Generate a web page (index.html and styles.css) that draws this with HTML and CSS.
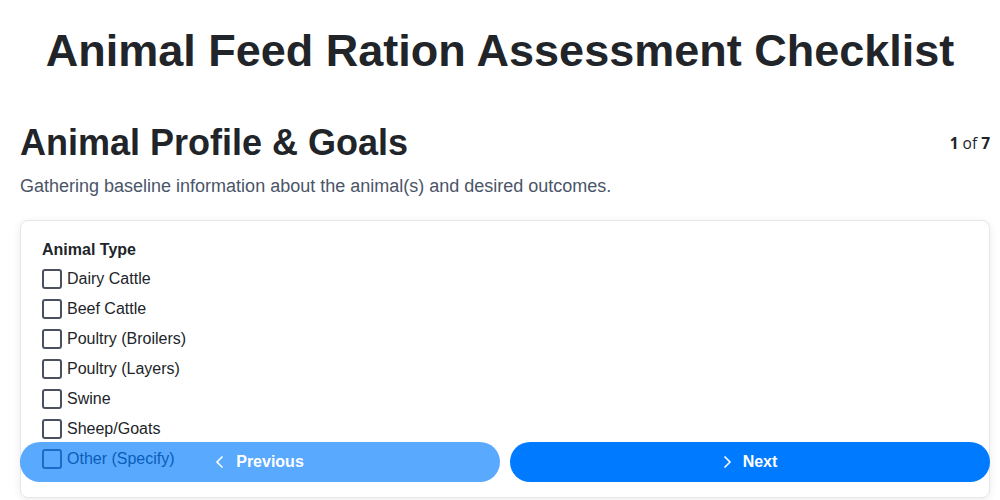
FILE: index.html
```html
<!DOCTYPE html>
<html lang="en">
<head>
<meta charset="utf-8">
<title>Animal Feed Ration Assessment Checklist</title>
<link rel="stylesheet" href="styles.css">
</head>
<body>
<h1 class="title">Animal Feed Ration Assessment Checklist</h1>
<main class="page">
  <div class="section-head">
    <h2 class="section-title">Animal Profile &amp; Goals</h2>
    <div class="counter"><b>1</b> of <b>7</b></div>
  </div>
  <p class="section-desc">Gathering baseline information about the animal(s) and desired outcomes.</p>
  <div class="card">
    <div class="field-label">Animal Type</div>
    <ul class="options">
      <li class="option"><span class="box"></span>Dairy Cattle</li>
      <li class="option"><span class="box"></span>Beef Cattle</li>
      <li class="option"><span class="box"></span>Poultry (Broilers)</li>
      <li class="option"><span class="box"></span>Poultry (Layers)</li>
      <li class="option"><span class="box"></span>Swine</li>
      <li class="option"><span class="box"></span>Sheep/Goats</li>
      <li class="option"><span class="box"></span>Other (Specify)</li>
    </ul>
  </div>
</main>
<nav class="nav">
  <button class="btn btn-prev" type="button">
    <svg class="chev" viewBox="0 0 16 16" width="16" height="16"><path d="M10.5 2.5 5 8l5.5 5.5" fill="none" stroke="currentColor" stroke-width="1.6"/></svg>
    Previous
  </button>
  <button class="btn btn-next" type="button">
    <svg class="chev" viewBox="0 0 16 16" width="16" height="16"><path d="M5.5 2.5 11 8l-5.5 5.5" fill="none" stroke="currentColor" stroke-width="1.6"/></svg>
    Next
  </button>
</nav>
</body>
</html>
```
FILE: styles.css
```css
html, body {
  margin: 0;
  padding: 0;
  background: #ffffff;
}
body {
  font-family: "Liberation Sans", Arial, sans-serif;
  color: #212529;
  overflow: hidden;
  height: 500px;
}
.title {
  margin: 0;
  padding-top: 26px;
  text-align: center;
  font-size: 45px;
  line-height: 50px;
  font-weight: 700;
  color: #212529;
}
.page {
  padding: 0 10px 0 20px;
}
.section-head {
  display: flex;
  justify-content: space-between;
  align-items: center;
  margin-top: 45px;
}
.section-title {
  margin: 0;
  font-size: 36px;
  line-height: 44px;
  font-weight: 700;
  color: #212529;
}
.counter {
  font-family: "Open Sans", sans-serif;
  font-size: 15.5px;
  color: #212529;
}
.section-desc {
  margin: 9px 0 0;
  font-size: 18px;
  line-height: 24px;
  color: #4a5568;
}
.card {
  margin-top: 22px;
  border: 1px solid #e5e7eb;
  border-radius: 8px;
  box-shadow: 0 2px 8px rgba(0,0,0,0.08);
  padding: 20px 21px 23px;
  background: #fff;
}
.field-label {
  font-weight: 700;
  font-size: 16px;
  line-height: 18px;
  margin-bottom: 5px;
}
.options {
  list-style: none;
  margin: 0;
  padding: 0;
}
.option {
  display: flex;
  align-items: center;
  height: 30px;
  font-size: 16px;
  color: #212529;
}
.box {
  width: 16px;
  height: 16px;
  border: 2px solid #4a5060;
  border-radius: 3px;
  margin-right: 5px;
  flex: none;
}
.nav {
  position: fixed;
  left: 20px;
  right: 10px;
  bottom: 18px;
  display: flex;
  gap: 10px;
}
.btn {
  flex: 1;
  height: 40px;
  border: 0;
  border-radius: 20px;
  background: #007bff;
  color: #fff;
  font-family: "Liberation Sans", Arial, sans-serif;
  font-weight: 700;
  font-size: 16px;
  display: flex;
  align-items: center;
  justify-content: center;
  gap: 8px;
  padding: 0 4px 0 0;
}
.btn-prev {
  opacity: 0.65;
}
.chev {
  display: block;
}
```
